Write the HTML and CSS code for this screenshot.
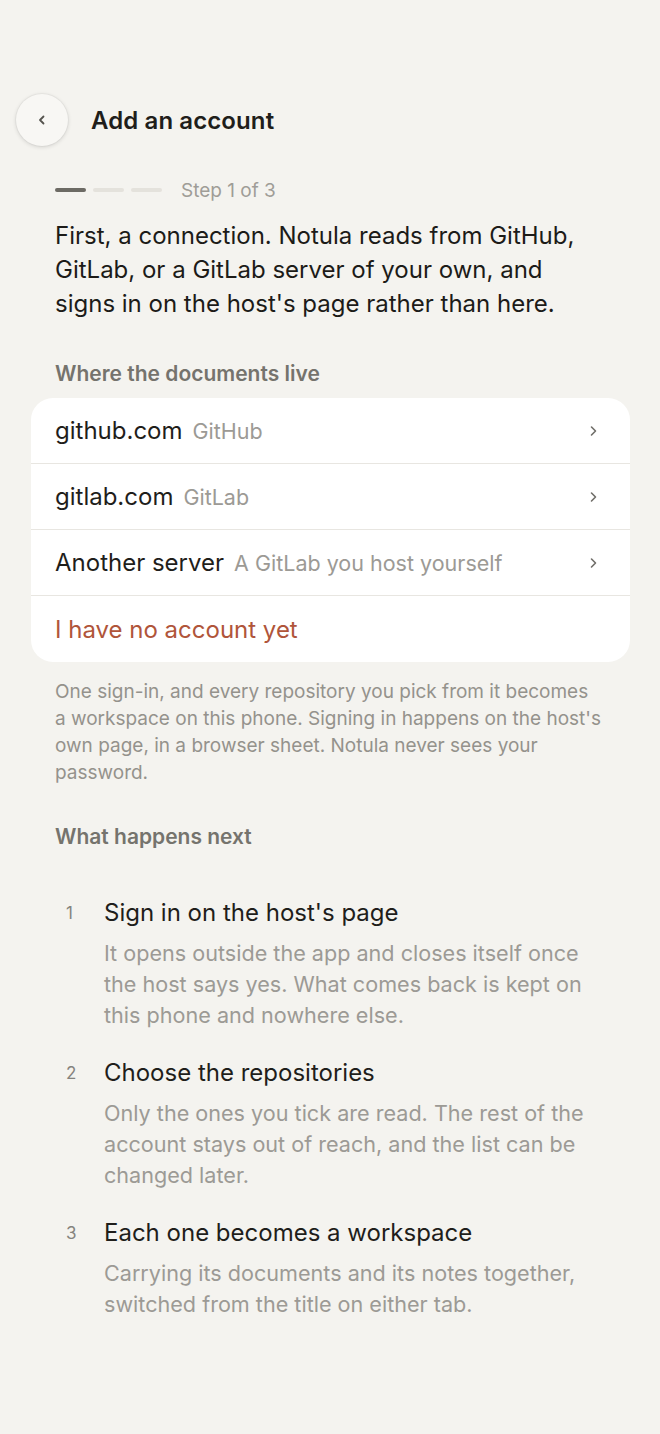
FILE: index.html
```html
<!doctype html>
<html lang="en">

<head>
    <meta charset="UTF-8" />
    <meta name="viewport" content="width=device-width, initial-scale=1.0" />
    <title>Add an account</title>
    <link rel="stylesheet" href="styles.css">
</head>

<body>
    <div class="screen">
        <div class="header">
            <button class="back-button" aria-label="Back">
                <svg width="14" height="14" viewBox="0 0 14 14">
                    <path d="M8.5 3.5 L5 7 L8.5 10.5" fill="none" stroke="#55534e" stroke-width="1.8" stroke-linecap="round" stroke-linejoin="round" />
                </svg>
            </button>
            <h1 class="header-title">Add an account</h1>
        </div>

        <div class="content">
            <div class="progress">
                <span class="progress-bar active"></span>
                <span class="progress-bar"></span>
                <span class="progress-bar"></span>
                <span class="progress-label">Step 1 of 3</span>
            </div>

            <p class="intro">First, a connection. Notula reads from GitHub, GitLab, or a GitLab server of your own, and signs in on the host's page rather than here.</p>

            <h2 class="section-title">Where the documents live</h2>

            <div class="card">
                <div class="row">
                    <span class="row-name">github.com</span>
                    <span class="row-note">GitHub</span>
                    <svg class="chevron" width="14" height="14" viewBox="0 0 14 14">
                        <path d="M5.5 3 L9.5 7 L5.5 11" fill="none" stroke="#6f6d68" stroke-width="1.6" stroke-linecap="round" stroke-linejoin="round" />
                    </svg>
                </div>
                <div class="row">
                    <span class="row-name">gitlab.com</span>
                    <span class="row-note">GitLab</span>
                    <svg class="chevron" width="14" height="14" viewBox="0 0 14 14">
                        <path d="M5.5 3 L9.5 7 L5.5 11" fill="none" stroke="#6f6d68" stroke-width="1.6" stroke-linecap="round" stroke-linejoin="round" />
                    </svg>
                </div>
                <div class="row">
                    <span class="row-name">Another server</span>
                    <span class="row-note">A GitLab you host yourself</span>
                    <svg class="chevron" width="14" height="14" viewBox="0 0 14 14">
                        <path d="M5.5 3 L9.5 7 L5.5 11" fill="none" stroke="#6f6d68" stroke-width="1.6" stroke-linecap="round" stroke-linejoin="round" />
                    </svg>
                </div>
                <div class="row">
                    <span class="row-name link">I have no account yet</span>
                </div>
            </div>

            <p class="footnote">One sign-in, and every repository you pick from it becomes a workspace on this phone. Signing in happens on the host's own page, in a browser sheet. Notula never sees your password.</p>

            <h2 class="section-title next-title">What happens next</h2>

            <ol class="steps">
                <li class="step">
                    <span class="step-number">1</span>
                    <div class="step-body">
                        <p class="step-title">Sign in on the host's page</p>
                        <p class="step-text">It opens outside the app and closes itself once the host says yes. What comes back is kept on this phone and nowhere else.</p>
                    </div>
                </li>
                <li class="step">
                    <span class="step-number">2</span>
                    <div class="step-body">
                        <p class="step-title">Choose the repositories</p>
                        <p class="step-text">Only the ones you tick are read. The rest of the account stays out of reach, and the list can be changed later.</p>
                    </div>
                </li>
                <li class="step">
                    <span class="step-number">3</span>
                    <div class="step-body">
                        <p class="step-title">Each one becomes a workspace</p>
                        <p class="step-text">Carrying its documents and its notes together, switched from the title on either tab.</p>
                    </div>
                </li>
            </ol>
        </div>
    </div>
</body>

</html>
```

FILE: styles.css
```css
body {
    font-family: Inter, "Noto Sans", sans-serif;
    margin: 0;
    padding: 0;
    background-color: #f4f3ef;
    color: #1f1e1b;
}

p, h1, h2, ol {
    margin: 0;
}

.screen {
    padding: 94px 0 80px;
}

.header {
    display: flex;
    align-items: center;
    padding-left: 16px;
    gap: 23px;
}

.back-button {
    width: 52px;
    height: 52px;
    border-radius: 50%;
    border: none;
    background-color: #f8f7f4;
    box-shadow: 0 1px 4px rgba(0, 0, 0, 0.14), 0 0 0 1px rgba(0, 0, 0, 0.03);
    display: flex;
    align-items: center;
    justify-content: center;
    padding: 0;
}

.header-title {
    font-size: 24px;
    font-weight: 600;
    letter-spacing: 0.1px;
    color: #1f1e1b;
}

.content {
    padding: 0 55px;
}

.progress {
    display: flex;
    align-items: center;
    gap: 7px;
    margin-top: 30px;
    height: 28px;
}

.progress-bar {
    width: 31px;
    height: 4px;
    border-radius: 2px;
    background-color: #e4e2dc;
}

.progress-bar.active {
    background-color: #6c6a64;
}

.progress-label {
    margin-left: 12px;
    font-size: 19px;
    color: #9f9d97;
}

.intro {
    margin-top: 15px;
    font-size: 24px;
    line-height: 34px;
    color: #1c1b18;
}

.section-title {
    font-size: 21px;
    font-weight: 600;
    color: #75736d;
    margin-top: 40px;
    margin-bottom: 12px;
}

.card {
    margin: 0 -25px 0 -24px;
    background-color: #ffffff;
    border-radius: 22px;
    overflow: hidden;
}

.row {
    display: flex;
    align-items: center;
    gap: 10px;
    height: 66px;
    box-sizing: border-box;
    padding: 0 30px 0 24px;
    border-bottom: 1px solid #e8e6e1;
}

.row:last-child {
    border-bottom: none;
}

.row-name {
    font-size: 24px;
    color: #1f1e1b;
}

.row-name.link {
    color: #b0553a;
}

.row-note {
    font-size: 21.5px;
    color: #9c9a95;
    flex: 1;
}

.chevron {
    flex-shrink: 0;
}

.footnote {
    margin-top: 16px;
    margin-right: 2px;
    font-size: 19px;
    line-height: 27px;
    color: #94928c;
}

.next-title {
    margin-top: 38px;
    margin-bottom: 44px;
}

.steps {
    list-style: none;
    padding: 0;
}

.step {
    display: flex;
    margin-bottom: 22px;
}

.step-number {
    width: 49px;
    padding-left: 11px;
    box-sizing: border-box;
    font-size: 17px;
    color: #85837e;
    line-height: 40px;
}

.step-body {
    flex: 1;
}

.step-title {
    font-size: 24px;
    line-height: 40px;
    margin-bottom: 5px;
    color: #1f1e1b;
}

.step-text {
    font-size: 21.6px;
    line-height: 31px;
    color: #9c9a95;
}
```
